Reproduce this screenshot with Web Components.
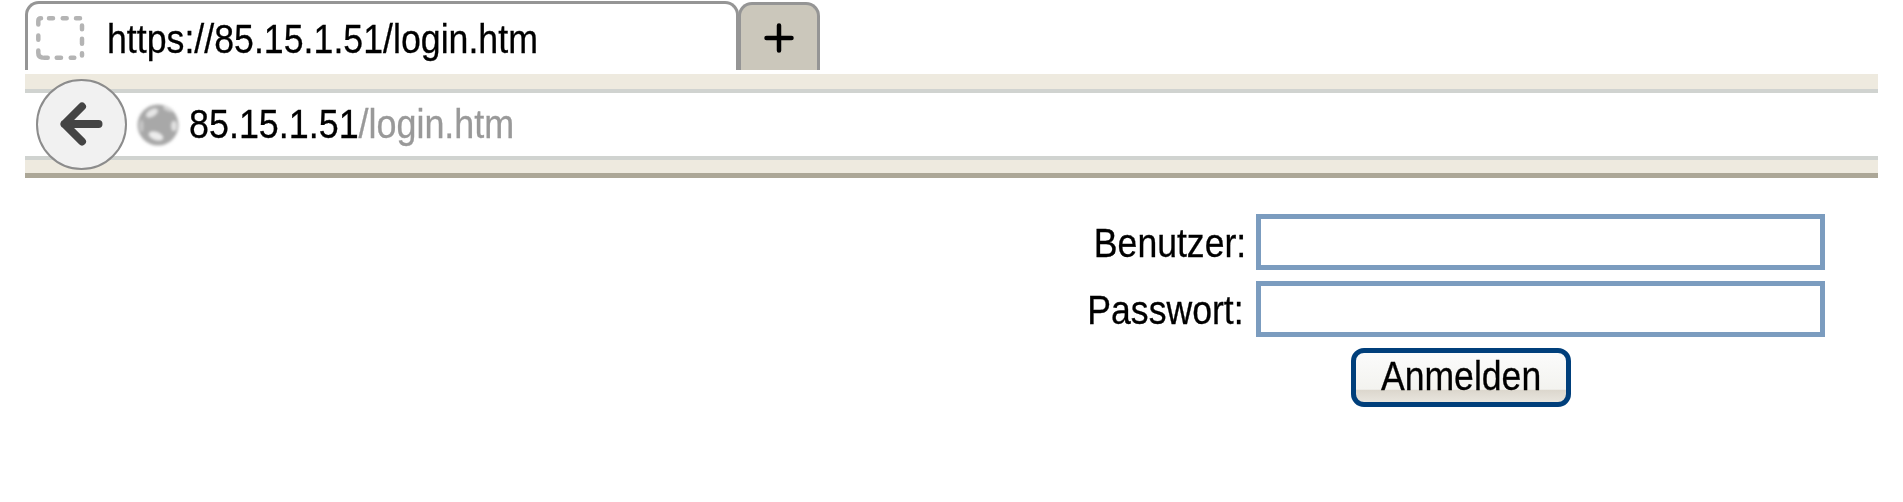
<!DOCTYPE html>
<html lang="de">
<head>
<meta charset="utf-8">
<title>login</title>
<style>
  html, body { margin: 0; background: #fff; }
  body { font-family: "Liberation Sans", Arial, sans-serif; color: #000; overflow: hidden; -webkit-text-stroke: .3px; }
</style>
</head>
<body>
<browser-frame>
  <browser-tab>https://85.15.1.51/login.htm</browser-tab>
  <address-bar host="85.15.1.51" path="/login.htm"></address-bar>
</browser-frame>
<login-form>
  <login-field label="Benutzer:" shift="0"></login-field>
  <login-field label="Passwort:" shift="2" type="password"></login-field>
  <login-button>Anmelden</login-button>
</login-form>

<script>
class BrowserFrame extends HTMLElement {
  constructor() {
    super();
    this.attachShadow({ mode: 'open' });
    this.shadowRoot.innerHTML = `
      <style>
        :host { display: block; }
        .tabs { display: flex; height: 70px; padding-left: 25px; box-sizing: border-box; }
        .bar { display: block; margin: 4px 25px 0; }
      </style>
      <div class="tabs"><slot name="tabs"></slot><new-tab></new-tab></div>
      <div class="bar"><slot></slot></div>
    `;
  }
  connectedCallback() {
    this.querySelector('browser-tab').slot = 'tabs';
  }
}

class BrowserTab extends HTMLElement {
  constructor() {
    super();
    this.attachShadow({ mode: 'open' });
    this.shadowRoot.innerHTML = `
      <style>
        :host {
          display: flex;
          align-items: center;
          width: 714px;
          height: 69px;
          margin-top: 1px;
          box-sizing: border-box;
          border: 3px solid #959595;
          border-bottom: 0;
          border-radius: 14px 14px 0 0;
          background: #fff;
          padding: 5px 0 0 8px;
          overflow: hidden;
        }
        svg { flex: none; display: block; margin-bottom: 4px; }
        .text {
          margin-left: 21px;
          font-size: 40px;
          white-space: nowrap;
          transform: scaleX(.893);
          transform-origin: left center;
        }
      </style>
      <svg width="50" height="46" viewBox="0 0 50 46">
        <path d="M2.3 9.5V6Q2.3 3.2 5 3.2M13 3.2H17M26.7 3.2H30.7M40 3.2H44M46 10.5V14.2M46 23.8V28.8M46 38.2V40.5M38.3 42.8H34.7M25 42.8H20.7M11.7 42.8H8M6 42.5Q2.3 42 2.3 38V35.5M2.3 24.8V20.5" fill="none" stroke="#b4b4b4" stroke-width="4.5" stroke-linecap="round"/>
      </svg>
      <span class="text"><slot></slot></span>
    `;
  }
}

class NewTab extends HTMLElement {
  constructor() {
    super();
    this.attachShadow({ mode: 'open' });
    this.shadowRoot.innerHTML = `
      <style>
        :host {
          display: flex;
          align-items: center;
          justify-content: center;
          width: 82px;
          height: 68px;
          margin: 2px 0 0 -1px;
          box-sizing: border-box;
          border: 3px solid #959595;
          border-bottom: 0;
          border-radius: 14px 14px 0 0;
          background: #cbc7bb;
        }
        svg { display: block; }
      </style>
      <svg width="32" height="32" viewBox="0 0 32 32">
        <path d="M16 3.5V28.5M3.5 16H28.5" fill="none" stroke="#000" stroke-width="4.5" stroke-linecap="round"/>
      </svg>
    `;
  }
}

class AddressBar extends HTMLElement {
  constructor() {
    super();
    this.attachShadow({ mode: 'open' });
    this.shadowRoot.innerHTML = `
      <style>
        :host {
          display: block;
          position: relative;
          height: 104px;
          box-sizing: border-box;
          padding: 15px 0 13px;
          background: #eeeadf;
          border-bottom: 5px solid #aca797;
        }
        .field {
          display: flex;
          align-items: center;
          height: 71px;
          box-sizing: border-box;
          background: #fff;
          border-top: 4px solid #d0d3d0;
          border-bottom: 4px solid #d0d3d0;
          padding-left: 110px;
        }
        .globe { flex: none; display: block; margin-right: 8px; }
        .url {
          font-size: 40px;
          white-space: nowrap;
          transform: scaleX(.897);
          transform-origin: left center;
        }
        .path { color: #999; }
        .back {
          position: absolute;
          left: 11px;
          top: 5px;
          width: 92px;
          height: 92px;
        }
      </style>
      <div class="field">
        <svg class="globe" width="46" height="46" viewBox="0 0 46 46">
          <defs>
            <filter id="soft" x="-20%" y="-20%" width="140%" height="140%"><feGaussianBlur stdDeviation="1.5"/></filter>
          </defs>
          <g filter="url(#soft)">
            <circle cx="23" cy="23" r="20.5" fill="#a8a8a8"/>
            <ellipse cx="17" cy="11" rx="6.5" ry="3.5" transform="rotate(-30 17 11)" fill="#e6e6e6"/>
            <ellipse cx="21" cy="34" rx="7.5" ry="4" transform="rotate(20 21 34)" fill="#ececec"/>
            <ellipse cx="39" cy="24" rx="2.8" ry="5" fill="#e2e2e2"/>
            <ellipse cx="33" cy="7" rx="5" ry="2" transform="rotate(25 33 7)" fill="#d4d4d4"/>
            <ellipse cx="6.5" cy="24" rx="2" ry="6" fill="#c8c8c8"/>
          </g>
        </svg>
        <span class="url"><span class="host"></span><span class="path"></span></span>
      </div>
      <svg class="back" viewBox="0 0 92 92">
        <circle cx="45.5" cy="45.5" r="44.5" fill="#f1f1f1" stroke="#8c8c8c" stroke-width="2"/>
        <path d="M62.5 45H28.5M46 27.5L28.5 45L46 62.5" fill="none" stroke="#444" stroke-width="8" stroke-linecap="round" stroke-linejoin="round"/>
      </svg>
    `;
  }

  connectedCallback() {
    this.shadowRoot.querySelector('.host').textContent = this.getAttribute('host');
    this.shadowRoot.querySelector('.path').textContent = this.getAttribute('path');
  }
}

class LoginForm extends HTMLElement {
  constructor() {
    super();
    this.attachShadow({ mode: 'open' });
    this.shadowRoot.innerHTML = `
      <style>
        :host {
          display: flex;
          justify-content: flex-end;
          margin-top: 36px;
          padding-right: 78px;
        }
        form { display: flex; flex-direction: column; gap: 11px; margin: 0; width: 737px; }
      </style>
      <form><slot></slot></form>
    `;
  }
}

class LoginField extends HTMLElement {
  constructor() {
    super();
    this.attachShadow({ mode: 'open' });
    this.shadowRoot.innerHTML = `
      <style>
        :host { display: flex; align-items: center; justify-content: flex-end; }
        label {
          padding-top: 2px;
          font-size: 40px;
          white-space: nowrap;
          transform: scaleX(.89);
          transform-origin: right center;
        }
        input {
          flex: none;
          width: 569px;
          height: 56px;
          box-sizing: border-box;
          margin: 0;
          padding: 0 8px;
          border: 5px solid #7b9cbf;
          outline: 0;
          background: #fff;
          font: inherit;
        }
      </style>
      <label></label>
      <input>
    `;
  }

  connectedCallback() {
    const label = this.shadowRoot.querySelector('label');
    label.textContent = this.getAttribute('label');
    label.style.marginRight = (10 + Number(this.getAttribute('shift') || 0)) + 'px';
    if (this.hasAttribute('type')) this.shadowRoot.querySelector('input').type = this.getAttribute('type');
  }
}

class LoginButton extends HTMLElement {
  constructor() {
    super();
    this.attachShadow({ mode: 'open' });
    this.shadowRoot.innerHTML = `
      <style>
        :host { display: block; margin: 0 0 0 263px; }
        button {
          display: flex;
          align-items: center;
          justify-content: center;
          width: 220px;
          height: 59px;
          box-sizing: border-box;
          margin: 0;
          padding: 0 0 3px;
          border: 5px solid #003f7b;
          border-radius: 13px;
          background: linear-gradient(#fbfbfb 0, #f3f3ef 74%, #dcd7cd 76%, #e8e5de 100%);
          color: #000;
          font-family: inherit;
          font-size: 40px;
          -webkit-text-stroke: .3px;
        }
        span { white-space: nowrap; transform: scaleX(.89); }
      </style>
      <button type="button"><span><slot></slot></span></button>
    `;
  }
}

customElements.define('browser-frame', BrowserFrame);
customElements.define('browser-tab', BrowserTab);
customElements.define('new-tab', NewTab);
customElements.define('address-bar', AddressBar);
customElements.define('login-form', LoginForm);
customElements.define('login-field', LoginField);
customElements.define('login-button', LoginButton);
</script>
</body>
</html>
